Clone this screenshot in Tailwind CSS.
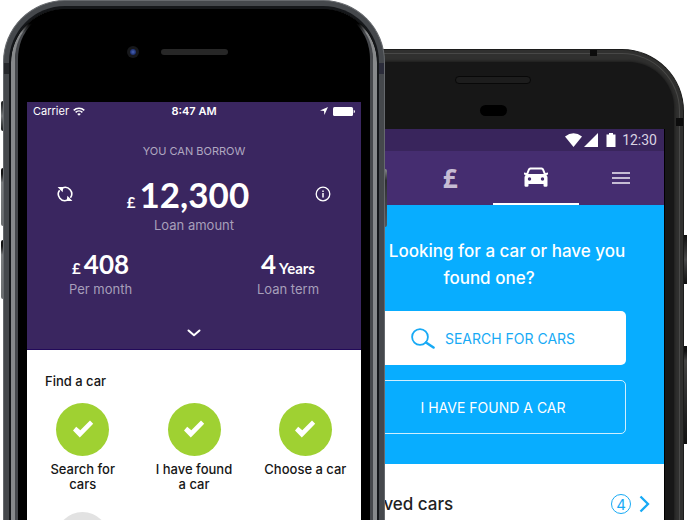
<!DOCTYPE html>
<html lang="en">
<head>
<meta charset="utf-8">
<meta name="viewport" content="width=device-width, initial-scale=1">
<title>Car finance app</title>
<script src="https://cdn.jsdelivr.net/npm/@tailwindcss/browser@4"></script>
</head>
<body class="bg-white">
<svg class="hidden" aria-hidden="true">
  <symbol id="tick" viewBox="0 0 22 20"><path d="M1 11.5 4.2 7.8 8.3 11.3 18 1.6 21.2 4.8 7.8 18.4Z" fill="#fff"/></symbol>
</svg>
<main class="flex h-screen overflow-hidden pr-1 pl-[3px] font-['Inter',sans-serif]">

  <!-- Front phone -->
  <section class="relative z-10 w-[56.1%] shrink-0" aria-label="Loan summary">
    <div class="absolute top-[101px] -left-[2px] h-[30px] w-1 rounded-l-xs bg-linear-to-b from-[#17191a] via-[#777a7c] to-[#17191a]"></div>
    <div class="absolute top-[168px] -left-[2px] h-[58px] w-1 rounded-l-xs bg-linear-to-b from-[#111] from-10% via-[#7b7e80] via-25% to-[#6b6e70]"></div>
    <div class="absolute top-[240px] -left-[2px] h-[59px] w-1 rounded-l-xs bg-linear-to-b from-[#111] from-10% via-[#7b7e80] via-25% to-[#6b6e70]"></div>
    <div class="absolute top-[169px] -right-[2px] h-[58px] w-1 rounded-r-xs bg-linear-to-b from-[#8a8c8e] via-[#2c2e30] via-20% to-[#55585a]"></div>

    <div class="relative h-full overflow-hidden rounded-t-[62px] border-x border-t border-[#66696d] bg-[#45484c] px-[5px] pt-[5px]">
      <div class="absolute top-[62px] left-0 h-[11px] w-[5px] bg-[#25272b]"></div>
      <div class="absolute top-[62px] right-0 h-[11px] w-[5px] bg-[#2b2c3a]"></div>
      <div class="relative h-full overflow-hidden rounded-t-[56px] border-x-2 border-t-[3px] border-[#15171a] bg-black">
        <div class="absolute inset-x-0 top-0 h-6 bg-linear-to-b from-black from-60% to-transparent"></div>
        <div class="h-full rounded-t-[54px] border-x-[4px] border-[#87898b]">
          <div class="flex h-full flex-col rounded-t-[50px] border-x-[3px] border-[#46484c] bg-black px-[9px]">
            <div class="relative flex h-[93px] shrink-0 justify-center pt-10">
              <div class="h-[6px] w-[67px] rounded-full bg-[#272727]"></div>
              <div class="absolute top-[37px] left-[30%] flex size-3 items-center justify-center rounded-full bg-[#17181b]">
                <div class="size-[6px] rounded-full bg-radial from-[#4a66b8] to-[#0b1550]"></div>
              </div>
            </div>

            <div class="flex flex-1 flex-col bg-white">
              <div class="border-b border-[#22095a] bg-[#3a2660] text-white">
                <div class="grid h-[18px] grid-cols-3 items-center px-[6px] text-[11px] leading-none">
                  <div class="flex items-center gap-1">
                    <span>Carrier</span>
                    <svg class="h-[9px] w-3" viewBox="0 0 12 9" fill="none" stroke="#fff" stroke-width="1.5" aria-hidden="true"><path d="M.7 3.4a7.6 7.6 0 0 1 10.6 0M2.6 5.4a4.9 4.9 0 0 1 6.8 0"/><path d="M6 8.8 4.2 7a2.6 2.6 0 0 1 3.6 0Z" fill="#fff" stroke="none"/></svg>
                  </div>
                  <span class="text-center font-semibold">8:47 AM</span>
                  <div class="flex items-center justify-end gap-[5px]">
                    <svg class="size-2" viewBox="0 0 8 8" aria-hidden="true"><path d="M8 0 4.4 8 4 4 0 3.6Z" fill="#fff"/></svg>
                    <svg class="h-[9px] w-[22px]" viewBox="0 0 22 9" fill="#fff" aria-hidden="true"><rect width="20" height="9" rx="1.5"/><path d="M20.7 2.8q1.3.5 1.3 1.7t-1.3 1.7Z"/></svg>
                  </div>
                </div>

                <div class="pt-6 text-center">
                  <h1 class="text-[11px] leading-[14px] text-[#b0a8c0]">YOU CAN BORROW</h1>
                  <div class="mt-[14px] flex items-center justify-between px-[30px]">
                    <button type="button" aria-label="Recalculate">
                      <svg class="size-4" viewBox="0 0 16 16" fill="none" stroke="#fff" stroke-width="1.6" aria-hidden="true"><path d="M5.400 1.900A6.600 6.600 0 0 1 13.400 11.800M10.600 14.100A6.600 6.600 0 0 1 2.600 4.200"/><path d="M.6 1 6.400 1 5.600 6.200ZM15.400 15 9.600 15 10.400 9.800Z" fill="#fff" stroke="none"/></svg>
                    </button>
                    <p class="flex items-baseline gap-1 pr-3 font-['Lato',sans-serif] font-bold"><span class="text-[15px]">£</span><span class="text-[35px] leading-[44px]">12,300</span></p>
                    <button type="button" aria-label="Loan information">
                      <svg class="size-4" viewBox="0 0 16 16" fill="none" stroke="#fff" aria-hidden="true"><circle cx="8" cy="8" r="6.8" stroke-width="1.3"/><path d="M8 7v4.6M8 4.5v1.4" stroke-width="1.5"/></svg>
                    </button>
                  </div>
                  <p class="text-[13px] leading-[18px] text-[#a79fba]">Loan amount</p>
                </div>

                <div class="mt-[15px] flex justify-between px-[42px] text-center">
                  <div>
                    <p class="flex items-baseline justify-center gap-[3px] font-['Lato',sans-serif] font-bold"><span class="text-[15px]">£</span><span class="text-[26px] leading-[30px]">408</span></p>
                    <p class="text-[13px] leading-[18px] text-[#a79fba]">Per month</p>
                  </div>
                  <div>
                    <p class="flex items-baseline justify-center gap-[3px] font-['Lato',sans-serif] font-bold"><span class="text-[26px] leading-[30px]">4</span><span class="text-[15px]">Years</span></p>
                    <p class="text-[13px] leading-[18px] text-[#a79fba]">Loan term</p>
                  </div>
                </div>
                <button type="button" class="mx-auto mt-[31px] mb-3 block" aria-label="Show more">
                  <svg class="h-2 w-[14px]" viewBox="0 0 14 8" fill="none" stroke="#fff" stroke-width="2" stroke-linecap="round" stroke-linejoin="round" aria-hidden="true"><path d="M1.5 1.5 7 6.3 12.5 1.5"/></svg>
                </button>
              </div>

              <div class="pt-[22px] text-[13px] font-medium text-[#161616]">
                <h2 class="px-[18px] leading-[18px]">Find a car</h2>
                <ul class="mt-[13px] grid grid-cols-3 gap-y-5 text-center leading-[15px]">
                  <li class="flex flex-col items-center gap-[6px]"><span class="flex size-[53px] items-center justify-center rounded-full bg-[#9fd132]"><svg class="h-5 w-[22px]" aria-hidden="true"><use href="#tick"/></svg></span><a href="#" class="px-4">Search for cars</a></li>
                  <li class="flex flex-col items-center gap-[6px]"><span class="flex size-[53px] items-center justify-center rounded-full bg-[#9fd132]"><svg class="h-5 w-[22px]" aria-hidden="true"><use href="#tick"/></svg></span><a href="#" class="px-4">I have found a car</a></li>
                  <li class="flex flex-col items-center gap-[6px]"><span class="flex size-[53px] items-center justify-center rounded-full bg-[#9fd132]"><svg class="h-5 w-[22px]" aria-hidden="true"><use href="#tick"/></svg></span><a href="#" class="px-4 whitespace-nowrap">Choose a car</a></li>
                  <li class="flex justify-center"><span class="size-[53px] rounded-full bg-[#e2e2e2]"></span></li>
                </ul>
              </div>
            </div>
          </div>
        </div>
      </div>
    </div>
  </section>

  <!-- Back phone -->
  <section class="relative mt-[49px] -ml-[83px] flex-1" aria-label="Car search">
    <div class="absolute top-[186px] -right-[3px] h-[49px] w-1 bg-linear-to-b from-[#111] via-[#4a4a4a] to-[#111]"></div>
    <div class="absolute top-[297px] -right-[3px] h-[98px] w-1 bg-linear-to-b from-[#111] from-5% via-[#444] via-15% to-[#111]"></div>

    <div class="relative h-full overflow-hidden rounded-t-[62px] border-x border-t border-[#1c1c1b] bg-[#30302f] p-[3px] pb-0">
      <div class="absolute top-0 right-[86px] h-[6px] w-[7px] bg-[#0c0c0c]"></div>
      <div class="absolute top-[68px] right-0 h-[8px] w-[7px] bg-[#0c0c0c]"></div>
      <div class="h-full rounded-t-[58px] border-x border-t border-[#484847] px-[5px] pt-2">
        <div class="flex h-full flex-col rounded-t-[46px] bg-[#171717] px-[9px] shadow-[0_0_3px_1px_#1d1d1d]">
          <div class="flex h-[67px] shrink-0 flex-col items-center pt-[14px]">
            <div class="h-2 w-[76px] rounded-full border border-[#080808] bg-[#1d1d1d]"></div>
            <div class="mt-[21px] h-[11px] w-[27px] rounded-full bg-black"></div>
          </div>

          <div class="flex flex-1 flex-col border-x border-black bg-white">
            <div class="flex h-[22px] items-center justify-end bg-[#39255c] pr-[7px] text-white">
              <svg class="h-[14px] w-[17px]" viewBox="0 0 17 14" fill="#fff" aria-hidden="true"><path d="M0 3.4Q8.5-3 17 3.4L8.5 14Z"/></svg>
              <svg class="ml-[2px] size-[14px]" viewBox="0 0 14 14" fill="#fff" aria-hidden="true"><path d="M14 0v14H0Z"/></svg>
              <svg class="ml-2 h-[14px] w-[10px]" viewBox="0 0 10 14" fill="#fff" aria-hidden="true"><path d="M3 0h4v1.5h2.5V14h-9V1.5H3Z"/></svg>
              <span class="ml-[6px] font-['Roboto',sans-serif] text-[14px] leading-none text-[#d9d3e2]">12:30</span>
            </div>
            <nav class="grid h-[54px] shrink-0 grid-cols-4 bg-[#452d70]">
              <span></span>
              <a href="#" class="flex items-center justify-center" aria-label="Finance"><span class="font-['Noto_Sans',sans-serif] text-[26px] leading-none font-bold text-[#c6bcd4]">£</span></a>
              <a href="#" class="flex items-center justify-center border-b-2 border-white" aria-label="Cars">
                <svg class="h-5 w-6" viewBox="0 0 24 20" aria-hidden="true"><path fill="#fff" fill-rule="evenodd" d="M6.3.5h11.4q1.6 0 2.2 1.5L21.5 6 24 5.6v2L22.4 8Q23.5 9 23.5 10.5v8q0 1.3-1.3 1.3h-1.4q-1.3 0-1.3-1.3V17h-15v1.5q0 1.3-1.3 1.3H1.8Q.5 19.8.5 18.5v-8Q.5 9 1.6 8L0 7.600V5.600L2.500 6 4.100 2Q4.700.5 6.300.5ZM6.800 2.500Q6 2.500 5.700 3.200L4.200 7h15.600L18.300 3.200Q18 2.500 17.200 2.500ZM5.500 10.300a1.700 1.700 0 1 0 0 3.400 1.700 1.700 0 0 0 0-3.400Zm13 0a1.700 1.700 0 1 0 0 3.400 1.700 1.700 0 0 0 0-3.400Z"/></svg>
              </a>
              <button type="button" class="flex items-center justify-center" aria-label="Menu">
                <svg class="h-3 w-[18px]" viewBox="0 0 18 12" stroke="#c6bcd4" stroke-width="1.8" aria-hidden="true"><path d="M0 1h18M0 6h18M0 11h18"/></svg>
              </button>
            </nav>
            <div class="bg-[#08adff] px-[38px] pt-[33px] pb-[30px] text-center">
              <h2 class="text-[17px] leading-[27px] font-medium whitespace-nowrap text-white"><span class="block pl-7">Looking for a car or have you</span><span class="block pr-2">found one?</span></h2>
              <button type="button" class="mt-[19px] flex h-[54px] w-full items-center justify-center gap-[10px] rounded-[5px] bg-white text-[14px] text-[#17aaf5]">
                <svg class="h-[21px] w-6" viewBox="0 0 24 21" fill="none" stroke="#17aaf5" aria-hidden="true"><circle cx="9" cy="9" r="7.900" stroke-width="1.800"/><path d="M15 14.500 22.500 19.500" stroke-width="2.600" stroke-linecap="round"/></svg>
                SEARCH FOR CARS
              </button>
              <button type="button" class="mt-[15px] flex h-[54px] w-full items-center justify-center rounded-[5px] border border-white/80 text-[14px] text-white">I HAVE FOUND A CAR</button>
            </div>
            <div class="flex items-center pt-7 pr-[14px] pl-[41px]">
              <h2 class="text-[17px] leading-[24px] font-medium text-[#222]">Saved cars</h2>
              <span class="ml-auto flex size-5 items-center justify-center rounded-full border border-[#17aaf5] text-[15px] leading-none text-[#17aaf5]">4</span>
              <svg class="ml-2 h-[18px] w-[11px]" viewBox="0 0 11 18" fill="none" stroke="#17aaf5" stroke-width="2.300" aria-hidden="true"><path d="M1.500 1.500 9 9 1.500 16.500"/></svg>
            </div>
          </div>
        </div>
      </div>
    </div>
  </section>
</main>
</body>
</html>
